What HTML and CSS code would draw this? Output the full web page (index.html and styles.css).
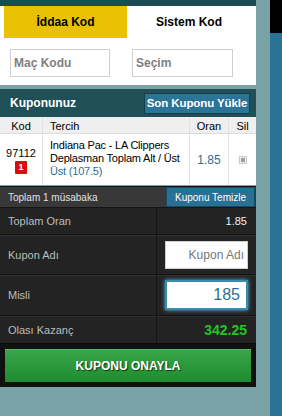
FILE: index.html
```html
<!DOCTYPE html>
<html lang="tr">
<head>
<meta charset="utf-8">
<title>Kupon</title>
<link rel="stylesheet" href="styles.css">
</head>
<body>
<div class="page">
  <div class="panel">
    <div class="topband"></div>
    <div class="codebox">
      <div class="tabs">
        <div class="tab active">İddaa Kod</div>
        <div class="tab">Sistem Kod</div>
      </div>
      <div class="inputs">
        <input class="codeinput mac" type="text" placeholder="Maç Kodu">
        <input class="codeinput secim" type="text" placeholder="Seçim">
      </div>
    </div>
    <div class="coupon">
      <div class="chead">
        <span class="ctitle">Kuponunuz</span>
        <button class="btn-load">Son Kuponu Yükle</button>
      </div>
      <div class="tgrid thead">
        <div class="c ckod">Kod</div>
        <div class="c ctercih">Tercih</div>
        <div class="c coran">Oran</div>
        <div class="c csil">Sil</div>
      </div>
      <div class="tgrid trow">
        <div class="c ckod">
          <span class="kod">97112</span>
          <span class="badge">1</span>
        </div>
        <div class="c ctercih">
          <div>Indiana Pac - LA Clippers</div>
          <div>Deplasman Toplam Alt / Üst</div>
          <div class="pick">Üst (107.5)</div>
        </div>
        <div class="c coran"><span class="oran">1.85</span></div>
        <div class="c csil"><span class="del"></span></div>
      </div>
      <div class="totalbar">
        <span>Toplam 1 müsabaka</span>
        <button class="btn-clear">Kuponu Temizle</button>
      </div>
      <div class="sumgrid">
        <div class="lab r1">Toplam Oran</div>
        <div class="val r1">1.85</div>
        <div class="lab r2">Kupon Adı</div>
        <div class="val r2"><input class="name" type="text" placeholder="Kupon Adı"></div>
        <div class="lab r3">Misli</div>
        <div class="val r3"><input class="misli" type="text" value="185"></div>
        <div class="lab r4">Olası Kazanç</div>
        <div class="val r4 win">342.25</div>
      </div>
      <div class="confirm">
        <button class="btn-confirm">KUPONU ONAYLA</button>
      </div>
    </div>
  </div>
  <div class="strip">
    <div class="strip-top"></div>
  </div>
</div>
</body>
</html>
```

FILE: styles.css
```css
* { box-sizing: border-box; }
html, body { margin: 0; padding: 0; }
body {
  width: 282px;
  height: 416px;
  overflow: hidden;
  background: #7aa3a8;
  font-family: "Liberation Sans", Arial, sans-serif;
}
.page {
  display: flex;
  height: 416px;
  gap: 14px;
}
.panel {
  width: 256px;
  display: flex;
  flex-direction: column;
}
.topband { height: 6px; background: #1d4b53; }
.codebox {
  background: #fff;
  padding: 0 4px 8px;
}
.tabs { display: flex; height: 32px; }
.tab {
  width: 124px;
  display: flex;
  align-items: center;
  justify-content: center;
  font-size: 12px;
  font-weight: bold;
  color: #000;
}
.tab.active { width: 123px; background: #e8c100; }
.inputs {
  display: flex;
  padding: 11px 0 0 6px;
  gap: 22px;
}
.codeinput {
  height: 28px;
  border: 1px solid #cfcfcf;
  padding: 0 4px 0 3px;
  font-family: inherit;
  font-size: 12px;
  font-weight: bold;
  color: #333;
  outline: none;
}
.codeinput::placeholder { color: #7f7f7f; }
.mac { width: 100px; }
.secim { width: 101px; }
.coupon { margin-top: 4px; display: flex; flex-direction: column; }
.chead {
  height: 28px;
  background: #1f4f57;
  display: flex;
  align-items: center;
  justify-content: space-between;
  padding: 0 6px 0 10px;
}
.ctitle { color: #fff; font-weight: bold; font-size: 12px; }
.btn-load {
  height: 21px;
  width: 106px;
  padding: 0;
  background: #2b7397;
  border: 1px solid #173f45;
  color: #fff;
  font-family: inherit;
  font-weight: bold;
  font-size: 11.5px;
  letter-spacing: -0.1px;
}
.tgrid {
  display: grid;
  grid-template-columns: 43px 147px 39px 27px;
}
.c { border-right: 1px solid #e2e2e2; }
.c:last-child { border-right: none; }
.thead {
  height: 17px;
  background: #efefef;
  border-bottom: 1px solid #dcdcdc;
  font-size: 11px;
  color: #000;
}
.thead .c { display: flex; align-items: center; justify-content: center; padding-top: 1px; }
.thead .ctercih { justify-content: flex-start; padding-left: 7px; }
.trow {
  background: #fff;
  height: 51px;
  font-size: 11px;
  color: #000;
}
.trow .ckod {
  display: flex;
  flex-direction: column;
  align-items: center;
  justify-content: center;
  gap: 2px;
  padding-top: 1px;
}
.badge {
  width: 12px;
  height: 13px;
  background: #d50d0d;
  color: #fff;
  font-size: 9px;
  font-weight: bold;
  display: flex;
  align-items: center;
  justify-content: center;
  border-radius: 1px;
}
.trow .ctercih {
  padding: 5px 0 0 7px;
  line-height: 13px;
  letter-spacing: -0.2px;
  white-space: nowrap;
}
.pick { color: #2a7094; }
.trow .coran, .trow .csil {
  display: flex;
  align-items: center;
  justify-content: center;
}
.oran { color: #2a6f94; font-size: 12px; }
.del {
  width: 8px;
  height: 8px;
  border: 1px solid #c8c8c8;
  background: #f2f2f2;
  position: relative;
  margin-left: 1px;
}
.del::after {
  content: "";
  position: absolute;
  left: 1px; top: 1px;
  width: 4px; height: 4px;
  background: #9a9a9a;
}
.totalbar {
  margin-top: 1px;
  height: 22px;
  background: #383838;
  border-top: 1px solid #151515;
  border-bottom: 1px solid #151515;
  display: flex;
  align-items: stretch;
  justify-content: space-between;
  padding-left: 8px;
  color: #e0e0e0;
  font-size: 10px;
}
.totalbar span { display: flex; align-items: center; }
.btn-clear {
  width: 89px;
  margin-right: 1px;
  padding: 0;
  background: #2a7094;
  border: 1px solid #1b4a5c;
  color: #fff;
  font-family: inherit;
  font-size: 10px;
}
.sumgrid {
  display: grid;
  grid-template-columns: 157px 99px;
  grid-template-rows: 26px 40px 41px 28px;
  background: #232323;
}
.lab, .val {
  display: flex;
  align-items: center;
  border-top: 1px solid #141414;
  box-shadow: inset 0 1px 0 #2e2e2e;
}
.r1 { border-top: none; box-shadow: none; }
.lab {
  padding-left: 8px;
  color: #bdbdbd;
  font-size: 11px;
  border-right: 1px solid #141414;
}
.val {
  justify-content: flex-end;
  padding-right: 9px;
  color: #f0f0f0;
  font-size: 11px;
}
.r2.val, .r3.val { padding-right: 8px; }
.name {
  width: 83px;
  height: 28px;
  border: 1px solid #cfcfcf;
  background: #fff;
  text-align: right;
  padding: 0 3px;
  font-family: inherit;
  font-size: 12px;
  color: #333;
  outline: none;
}
.name::placeholder { color: #777; }
.misli {
  width: 83px;
  height: 30px;
  border: 2px solid #3a8cae;
  box-shadow: 0 0 4px #5cbfe4;
  background: #fff;
  text-align: right;
  padding: 0 6px;
  font-family: inherit;
  font-size: 16px;
  color: #2a7094;
  outline: none;
}
.win { color: #22c522; font-weight: bold; font-size: 14px; }
.confirm {
  background: #111;
  padding: 5px 5px 5px 5px;
  border-top: 1px solid #0b0b0b;
}
.btn-confirm {
  width: 246px;
  height: 33px;
  padding: 0;
  border: none;
  background: linear-gradient(#3aa54a, #1f8c30);
  box-shadow: inset 0 1px 0 #52b960;
  color: #fff;
  font-family: inherit;
  font-weight: bold;
  font-size: 12px;
  text-shadow: 1px 1px 1px #0a3a10;
}
.strip {
  width: 12px;
  background: #2a7296;
}
.strip-top { height: 33px; background: #000; }
```
